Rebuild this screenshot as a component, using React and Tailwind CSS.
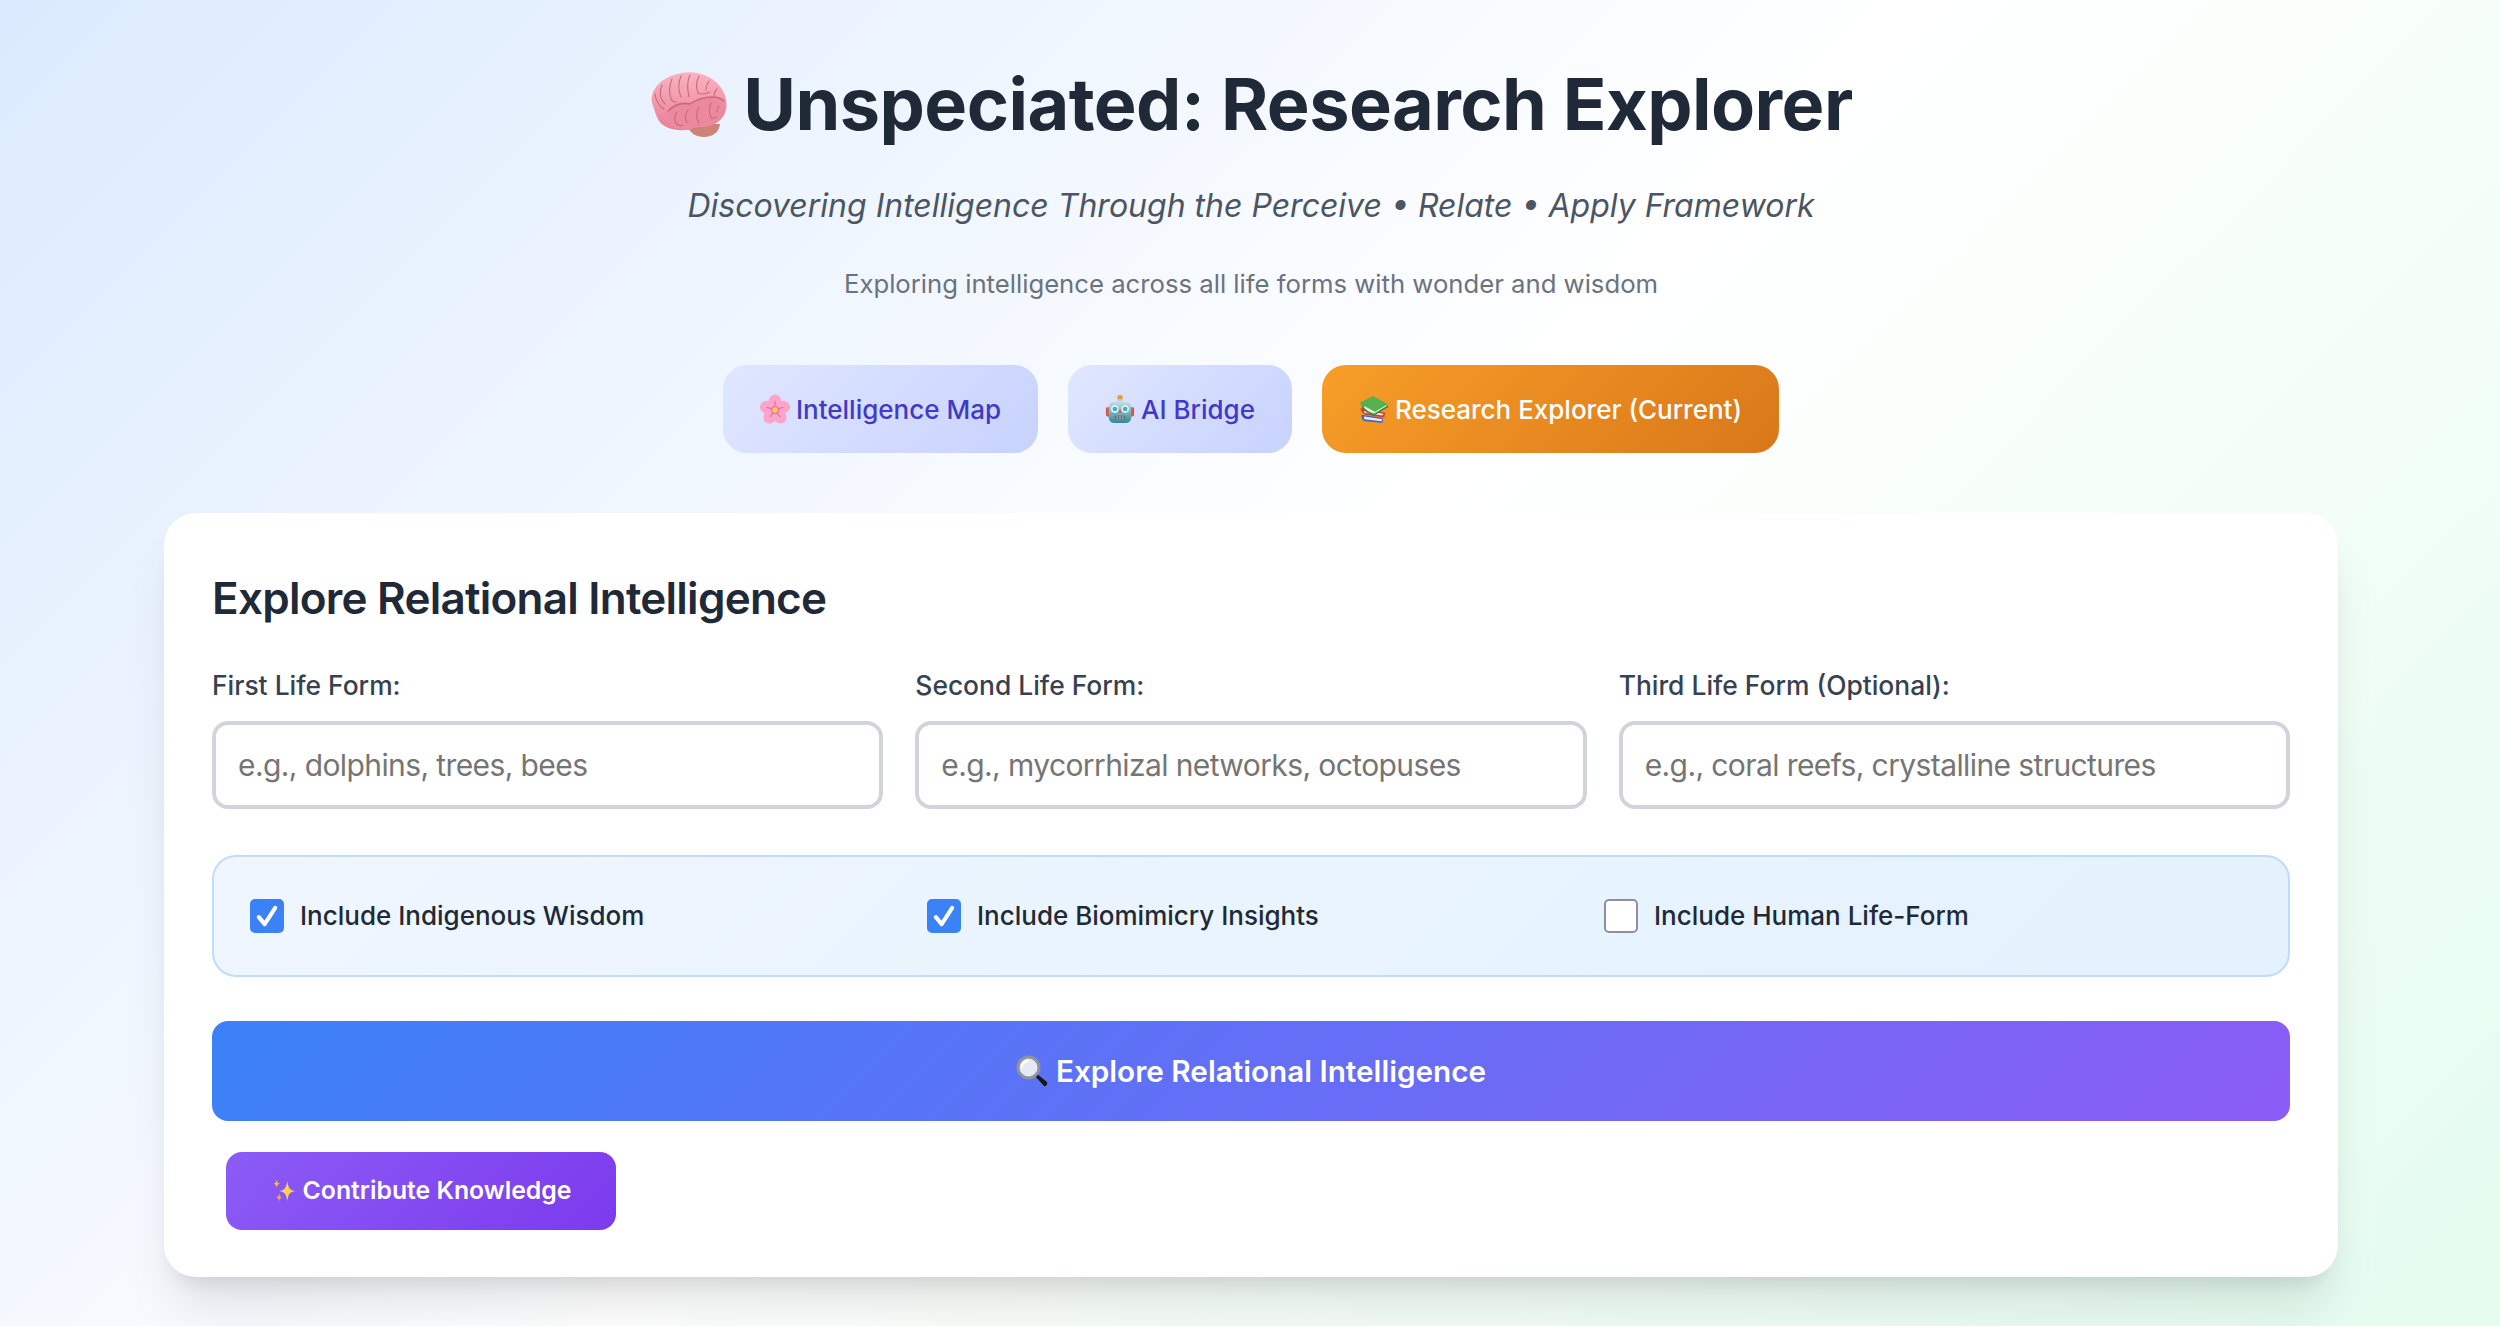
import { useState } from "react";

const inter = "font-['Inter',sans-serif]";

function BrainIcon({ className }) {
  return (
    <svg viewBox="0 0 80 68" className={className}>
      <defs>
        <linearGradient id="brainFill" x1="0" y1="0" x2="0" y2="1">
          <stop offset="0" stopColor="#f9b4c1" />
          <stop offset="1" stopColor="#ea7f96" />
        </linearGradient>
      </defs>
      <path d="M38 54c2 9 9 13 17 13 9 0 15-5 16-13z" fill="#cf8378" />
      <path
        d="M3 33C1 24 7 14 16 9 26 3 38 1 48 3c11 2 21 8 26 18 5 9 5 20-1 27-5 6-13 9-22 9-6 0-9 3-14 3-11 1-22-2-27-9-3-5-4-10-7-18z"
        fill="url(#brainFill)"
      />
      <path
        d="M19 41c6-6 14-9 22-7 6-4 14-7 22-7 6 0 11 2 13 7 1 6-1 11-4 15-6 6-13 8-22 8-6 0-9 3-14 3-7 0-12-2-15-6-4-4-5-9-2-13z"
        fill="#eb8a9f"
      />
      <g fill="none" stroke="#cf6580" strokeWidth="1.1" strokeLinecap="round">
        <path d="M19 41c6-6 14-9 22-7 6-4 14-7 22-7 5 0 9 1 12 4" strokeWidth="1.700" />
        <path d="M13 15c-3 7-2 14 3 19M6 24c1 7 4 12 9 15" />
        <path d="M23 9c-3 7-3 14-1 20 1 2 3 3 5 3M32 6c-3 7-3 14 0 21M41 5c-3 6-3 13-1 22" />
        <path d="M50 6c-3 6-3 12-1 17 4 2 8 1 12-1M60 11c-2 3-3 6-3 9M68 19c-2 2-3 4-3 7" />
        <path d="M28 42c-3 4-3 9 0 12 2 2 4 2 6 1M39 40c-3 4-3 9-1 13M50 37c-3 5-3 11 0 16M62 33c-2 5-2 10 0 15 2 1 4 0 6-1M70 36c-2 2-2 4-2 6" />
      </g>
    </svg>
  );
}

function FlowerIcon({ className }) {
  const petals = [0, 72, 144, 216, 288];
  return (
    <svg viewBox="0 0 32 32" className={className}>
      {petals.map((a) => (
        <g key={a} transform={`rotate(${a} 16 17)`}>
          <ellipse cx="16" cy="8.500" rx="7" ry="8" fill="#fca5cb" />
          <path d="M16 15V8" stroke="#f0659f" strokeWidth="1.2" strokeLinecap="round" />
        </g>
      ))}
      <circle cx="16" cy="17" r="4.500" fill="#f472ab" />
      <circle cx="16" cy="17" r="2.800" fill="#f9d34c" />
    </svg>
  );
}

function RobotIcon({ className }) {
  return (
    <svg viewBox="0 0 32 32" className={className}>
      <defs>
        <linearGradient id="robotHead" x1="0" y1="0" x2="0" y2="1">
          <stop offset="0" stopColor="#c9dfe3" />
          <stop offset="1" stopColor="#2f8797" />
        </linearGradient>
      </defs>
      <circle cx="16" cy="4" r="3" fill="#f39a2e" />
      <rect x="13.500" y="5.500" width="5" height="3" fill="#c8ced2" />
      <rect x="1" y="14" width="4.500" height="10" rx="1.500" fill="#d9534f" />
      <rect x="26.500" y="14" width="4.500" height="10" rx="1.500" fill="#d9534f" />
      <rect x="4" y="8" width="24" height="23" rx="6" fill="url(#robotHead)" />
      <circle cx="10.500" cy="16" r="4" fill="#eaf6f8" />
      <circle cx="21.500" cy="16" r="4" fill="#eaf6f8" />
      <circle cx="10.500" cy="16" r="2.500" fill="#32b4d2" />
      <circle cx="21.500" cy="16" r="2.500" fill="#32b4d2" />
      <path d="M16 16l2 4h-4z" fill="#e0534f" />
      <rect x="10.500" y="23" width="11" height="4" rx="1.500" fill="#5f6f74" />
      <path d="M13 23v4M16 23v4M19 23v4" stroke="#c7d2d5" strokeWidth="0.8" />
    </svg>
  );
}

function BooksIcon({ className }) {
  return (
    <svg viewBox="0 0 32 32" className={className}>
      <path d="M3 22l21 3 2 2-1 4-19-2c-3-1-4-5-3-7z" fill="#4b67b8" />
      <path d="M6 24l19 3-1 2-18-2c-1-1-1-2 0-3z" fill="#eceae4" />
      <path d="M2 15l20 4 6 1-1 5-20-3c-3-1-6-5-5-7z" fill="#d93b34" />
      <path d="M6 18l20 3-1 2-19-3c-1-1-1-1 0-2z" fill="#efeee8" />
      <path d="M1 9L15 2l16 9-15 9C10 19 2 15 1 9z" fill="#57b04e" />
      <path d="M6 13l11 6 12-7 1 2-14 8C11 21 6 18 5 15z" fill="#eceae4" />
      <path d="M4 13c4 5 9 7 12 8l15-9v2L16 23C10 21 5 18 3 14z" fill="#2f8a3a" />
    </svg>
  );
}

function SearchIcon({ className }) {
  return (
    <svg viewBox="0 0 32 32" className={className}>
      <path d="M19 21l2-2 10 8c1 2-1 5-3 4z" fill="#17171b" />
      <circle cx="12.500" cy="12.500" r="10.500" fill="#e6e9f3" stroke="#8f949c" strokeWidth="3" />
      <path d="M6 12c0-3 3-6 6-6" stroke="#ffffff" strokeWidth="2" fill="none" strokeLinecap="round" />
    </svg>
  );
}

function SparklesIcon({ className }) {
  return (
    <svg viewBox="0 0 32 32" className={className}>
      <path d="M20 3c1 9 3 12 10 13-7 1-9 4-10 13-1-9-3-12-10-13 7-1 9-4 10-13z" fill="#fcd34d" />
      <path d="M7 2c.5 3 1.500 4.500 4 5-2.500.5-3.500 2-4 5-.5-3-1.500-4.500-4-5 2.500-.5 3.500-2 4-5z" fill="#fbbf24" />
      <path d="M10 19c.5 3 1.500 4.500 3.500 5-2 .5-3 2-3.500 5-.5-3-1.500-4.500-3.500-5 2-.5 3-2 3.500-5z" fill="#f9a825" />
    </svg>
  );
}

function LifeFormField({ label, placeholder, value, onChange }) {
  return (
    <div>
      <label className="block text-[26.4px] leading-[40px] font-medium text-[#374151] mb-[16px]">
        {label}
      </label>
      <input
        value={value}
        onChange={(e) => onChange(e.target.value)}
        placeholder={placeholder}
        className="w-full h-[88px] px-[22px] text-[30px] tracking-[-0.6px] text-[#1f2937] bg-white border-[4px] border-[#d1d5db] rounded-[16px] outline-none placeholder:text-[#757575]"
      />
    </div>
  );
}

function CheckOption({ label, checked, onChange }) {
  return (
    <label className="flex items-center gap-[16px] text-[26px] leading-[40px] font-medium text-[#1f2937]">
      <span className={`flex items-center justify-center w-[34px] h-[34px] rounded-[5px] border-[2px] ${checked ? "bg-[#3b82f6] border-[#3b82f6]" : "bg-white border-[#8f8f9d]"}`}>
        {checked && (
          <svg viewBox="0 0 24 24" className="w-[28px] h-[28px]" fill="none" stroke="#fff" strokeWidth="3.5" strokeLinecap="round" strokeLinejoin="round">
            <path d="M5 13l5 6L19 5" />
          </svg>
        )}
      </span>
      <input type="checkbox" checked={checked} onChange={(e) => onChange(e.target.checked)} className="hidden" />
      {label}
    </label>
  );
}

function NavButton({ icon, children, active }) {
  return (
    <button
      className={`h-[88px] px-[37px] flex items-center gap-[6px] rounded-[24px] text-[26px] font-medium ${active ? "bg-[linear-gradient(135deg,#f79e28,#d9771a)] text-white" : "bg-[linear-gradient(135deg,#e0e7ff,#c7d2fe)] text-[#4338ca]"}`}
    >
      {icon}
      {children}
    </button>
  );
}

export default function App() {
  const [first, setFirst] = useState("");
  const [second, setSecond] = useState("");
  const [third, setThird] = useState("");
  const [indigenous, setIndigenous] = useState(true);
  const [biomimicry, setBiomimicry] = useState(true);
  const [human, setHuman] = useState(false);

  return (
    <div className={`${inter} h-[1326px] overflow-hidden bg-[linear-gradient(135deg,#dbeafe,#ffffff_50%,#e4fcee)] pl-[164px] pr-[162px] pt-[64px]`}>
      <div className="text-center">
        <h1 className="flex items-center justify-center gap-[14px] text-[72px] tracking-[-0.55px] leading-[80px] font-bold text-[#1f2937]">
          <BrainIcon className="w-[80px] h-[68px]" />
          Unspeciated: Research Explorer
        </h1>
        <p className="mt-[34px] text-[32px] leading-[56px] italic text-[#4b5563]">
          Discovering Intelligence Through the Perceive • Relate • Apply Framework
        </p>
        <p className="mt-[30px] text-[25.7px] leading-[40px] text-[#6b7280]">
          Exploring intelligence across all life forms with wonder and wisdom
        </p>
      </div>

      <div className="flex justify-center gap-[30px] mt-[61px]">
        <NavButton icon={<FlowerIcon className="w-[30px] h-[30px]" />}>Intelligence Map</NavButton>
        <NavButton icon={<RobotIcon className="w-[30px] h-[30px]" />}>AI Bridge</NavButton>
        <NavButton active icon={<BooksIcon className="w-[30px] h-[30px]" />}>Research Explorer (Current)</NavButton>
      </div>

      <div className="mt-[60px] h-[764px] bg-white rounded-[32px] px-[48px] pt-[53px] shadow-[0_40px_50px_-10px_rgba(0,0,0,0.1),0_16px_20px_-12px_rgba(0,0,0,0.1)]">
        <h2 className="text-[44px] tracking-[-0.75px] leading-[64px] font-semibold text-[#1f2937]">Explore Relational Intelligence</h2>
        <div className="grid grid-cols-3 gap-[32px] mt-[35px]">
          <LifeFormField label="First Life Form:" placeholder="e.g., dolphins, trees, bees" value={first} onChange={setFirst} />
          <LifeFormField label="Second Life Form:" placeholder="e.g., mycorrhizal networks, octopuses" value={second} onChange={setSecond} />
          <LifeFormField label="Third Life Form (Optional):" placeholder="e.g., coral reefs, crystalline structures" value={third} onChange={setThird} />
        </div>

        <div className="grid grid-cols-3 gap-[29px] items-center h-[122px] mt-[46px] px-[36px] rounded-[24px] border-[2px] border-[#bfdbfe] bg-[linear-gradient(135deg,#eff6ff,#e3f2fd)]">
          <CheckOption label="Include Indigenous Wisdom" checked={indigenous} onChange={setIndigenous} />
          <CheckOption label="Include Biomimicry Insights" checked={biomimicry} onChange={setBiomimicry} />
          <CheckOption label="Include Human Life-Form" checked={human} onChange={setHuman} />
        </div>

        <button className="mt-[44px] w-full h-[100px] flex items-center justify-center gap-[8px] rounded-[16px] bg-[linear-gradient(135deg,#3b82f6,#8b5cf6)] text-white text-[29.7px] font-semibold">
          <SearchIcon className="w-[32px] h-[32px]" />
          Explore Relational Intelligence
        </button>

        <button className="mt-[31px] ml-[14px] w-[390px] h-[78px] flex items-center justify-center gap-[6px] rounded-[16px] bg-[linear-gradient(135deg,#8b5cf6,#7c3aed)] text-white text-[24.8px] font-semibold">
          <SparklesIcon className="w-[26px] h-[26px]" />
          Contribute Knowledge
        </button>
      </div>
    </div>
  );
}
